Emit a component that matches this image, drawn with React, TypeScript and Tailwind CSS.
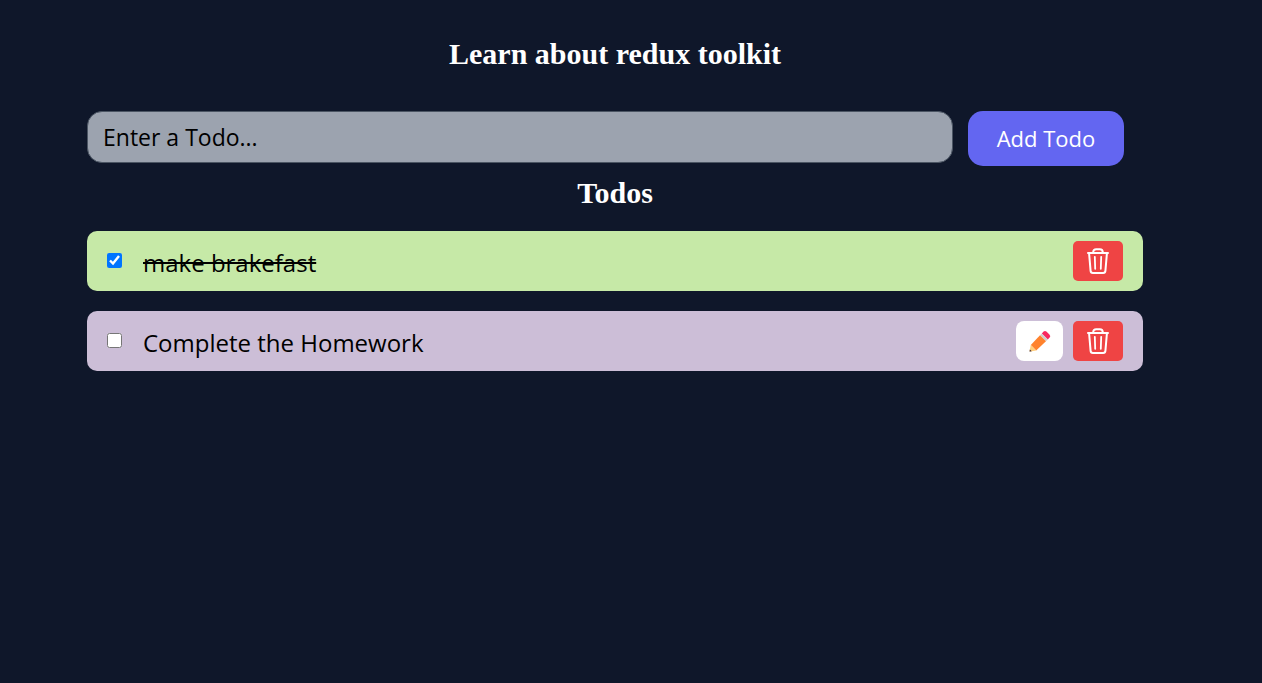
import { useState, type FormEvent } from "react";

type Todo = { id: number; text: string; done: boolean };

const initialTodos: Todo[] = [
  { id: 1, text: "make brakefast", done: true },
  { id: 2, text: "Complete the Homework", done: false },
];

function TrashIcon() {
  return (
    <svg
      width="24"
      height="28"
      viewBox="0 0 24 28"
      fill="none"
      stroke="currentColor"
      strokeWidth="2"
      strokeLinecap="round"
      strokeLinejoin="round"
      aria-hidden="true"
    >
      <path d="M2 6h20" />
      <path d="M7.2 5.5C7.2 3.2 8.4 2.2 10.2 2.2h3.6c1.8 0 3 1 3 3.3" />
      <path d="M3.1 6.5l1.5 17.4c.1 1.3.9 2 2.2 2h10.4c1.3 0 2.1-.7 2.2-2l1.5-17.4" />
      <path d="M8.8 9.8l.4 12M15.2 9.8l-.4 12" strokeWidth="1.8" />
    </svg>
  );
}

function PencilIcon() {
  return (
    <svg width="22" height="22" viewBox="0 0 22 22" aria-hidden="true">
      <path d="M14.6 1.6a2 2 0 0 1 2.8 0l3.2 3.2a2 2 0 0 1 0 2.8L18.8 9.4l-6-6z" fill="#f8285f" />
      <path d="M12.8 3.4l6 6-1.8 1.8-6-6z" fill="#d2cccc" />
      <path d="M11 5.2l6 6-9.8 9.2-5.4-5.4z" fill="#ff822d" />
      <path d="M1.8 15l5.4 5.4-5.9 1.1c-.6.1-.8-.1-.7-.7z" fill="#ffce7c" />
      <path d="M.9 19.4l1.9 1.8-1.7.4c-.5.1-.6-.1-.5-.5z" fill="#402a32" />
    </svg>
  );
}

export default function App() {
  const [todos, setTodos] = useState(initialTodos);
  const [text, setText] = useState("");

  const addTodo = (event: FormEvent) => {
    event.preventDefault();
    if (!text.trim()) return;
    setTodos([...todos, { id: Date.now(), text, done: false }]);
    setText("");
  };

  const toggle = (id: number) =>
    setTodos(todos.map((t) => (t.id === id ? { ...t, done: !t.done } : t)));

  const edit = (todo: Todo) => {
    setText(todo.text);
    setTodos(todos.filter((t) => t.id !== todo.id));
  };

  return (
    <main className="min-h-screen bg-[#0f172a] pt-9 pr-[119px] pb-9 pl-[87px] font-['Open_Sans',sans-serif]">
      <h1 className="text-center font-['Liberation_Serif',serif] text-[30px] leading-9 font-bold text-white">
        Learn about redux toolkit
      </h1>
      <form onSubmit={addTodo} className="mt-[39px] mr-[19px] flex items-start gap-[15px]">
        <input
          type="text"
          aria-label="Todo"
          placeholder="Enter a Todo..."
          value={text}
          onChange={(e) => setText(e.target.value)}
          className="h-[52px] min-w-0 flex-1 rounded-[15px] border border-[#4b5563] bg-[#9ca3af] px-[15px] text-[23px] text-black outline-none placeholder:text-black"
        />
        <button type="submit" className="h-[55px] w-[156px] rounded-[15px] bg-[#6366f1] text-[22px] text-white">
          Add Todo
        </button>
      </form>
      <h2 className="mt-[9px] text-center font-['Liberation_Serif',serif] text-[30px] leading-9 font-bold text-white">
        Todos
      </h2>
      <ul className="mt-5 flex flex-col gap-5">
        {todos.map((todo) => (
          <li
            key={todo.id}
            className={`flex h-[60px] items-center rounded-[10px] px-5 ${todo.done ? "bg-[#c6e9a7]" : "bg-[#ccbed7]"}`}
          >
            <input
              id={`todo-${todo.id}`}
              type="checkbox"
              checked={todo.done}
              onChange={() => toggle(todo.id)}
              className="mb-px size-[15px] accent-[#0075ff]"
            />
            <label
              htmlFor={`todo-${todo.id}`}
              className={`ml-[21px] min-w-0 flex-1 truncate pt-1 text-[24px] leading-9 text-black ${todo.done ? "line-through" : ""}`}
            >
              {todo.text}
            </label>
            {!todo.done && (
              <button
                type="button"
                aria-label="Edit"
                onClick={() => edit(todo)}
                className="mr-2.5 flex h-10 w-[47px] items-center justify-center rounded-[8px] bg-white"
              >
                <PencilIcon />
              </button>
            )}
            <button
              type="button"
              aria-label="Delete"
              onClick={() => setTodos(todos.filter((t) => t.id !== todo.id))}
              className="flex h-10 w-[50px] items-center justify-center rounded-[5px] bg-[#ef4444] text-white"
            >
              <TrashIcon />
            </button>
          </li>
        ))}
      </ul>
    </main>
  );
}
